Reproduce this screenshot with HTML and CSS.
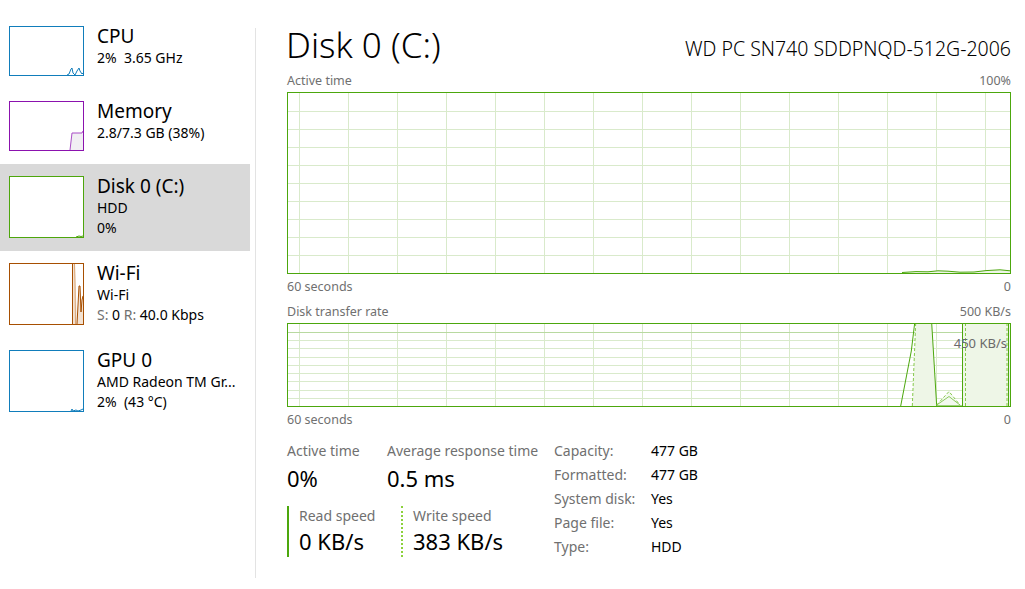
FILE: index.html
```html
<!DOCTYPE html>
<html lang="en">
<head>
<meta charset="utf-8">
<title>Task Manager - Disk 0 (C:)</title>
<link rel="stylesheet" href="styles.css">
</head>
<body>
<div class="app">
  <aside class="sidebar">
    <div class="item">
      <div class="thumb thumb-cpu">
        <svg viewBox="0 0 73 48" width="73" height="48">
          <polyline class="ln-cpu" points="57,48 59,47 61,42 62,41 63,46 65,48 67,44 69,41 70,44 72,47 73,46"/>
        </svg>
      </div>
      <div class="info">
        <div class="name">CPU</div>
        <div class="sub">2%&nbsp; 3.65 GHz</div>
      </div>
    </div>
    <div class="item">
      <div class="thumb thumb-mem">
        <svg viewBox="0 0 73 48" width="73" height="48">
          <polygon class="fl-mem" points="60,48 62,31 72,31 73,29 73,48"/>
          <polyline class="ln-mem" points="60,48 62,31 72,31 73,29"/>
        </svg>
      </div>
      <div class="info">
        <div class="name">Memory</div>
        <div class="sub">2.8/7.3 GB (38%)</div>
      </div>
    </div>
    <div class="item selected">
      <div class="thumb thumb-disk tall">
        <svg viewBox="0 0 73 60" width="73" height="60">
          <polyline class="ln-disk" points="66,60 69,59 71,59.5 73,59"/>
        </svg>
      </div>
      <div class="info">
        <div class="name">Disk 0 (C:)</div>
        <div class="sub">HDD</div>
        <div class="sub">0%</div>
      </div>
    </div>
    <div class="item">
      <div class="thumb thumb-net tall">
        <svg viewBox="0 0 73 60" width="73" height="60">
          <polygon class="fl-net" points="62,60 62,0 65,0 66,30 67,60 69,20 70,24 71,45 72,36 73,30 73,60"/>
          <polyline class="ln-net" points="62.5,60 62.5,0"/>
          <polyline class="ln-net2" points="64.5,0 65,20 65.5,60"/>
          <polyline class="ln-net" points="67,60 69,22 70,22 71,48 72,36 73,32"/>
        </svg>
      </div>
      <div class="info">
        <div class="name">Wi-Fi</div>
        <div class="sub">Wi-Fi</div>
        <div class="sub"><span class="dim">S:</span> 0 <span class="dim">R:</span> 40.0 Kbps</div>
      </div>
    </div>
    <div class="item">
      <div class="thumb thumb-gpu tall">
        <svg viewBox="0 0 73 60" width="73" height="60">
          <polyline class="ln-cpu" points="61,60 62,58 63,60 66,59 68,60 71,59 73,58"/>
        </svg>
      </div>
      <div class="info">
        <div class="name">GPU 0</div>
        <div class="sub">AMD Radeon TM Gr...</div>
        <div class="sub">2%&nbsp; (43 °C)</div>
      </div>
    </div>
  </aside>

  <div class="divider"></div>

  <main class="detail">
    <header class="head">
      <h1 class="title">Disk 0 (C:)</h1>
      <div class="model">WD PC SN740 SDDPNQD-512G-2006</div>
    </header>

    <div class="axis axis-top"><span>Active time</span><span>100%</span></div>
    <div class="graph graph-active">
      <svg viewBox="0 0 722 180" width="722" height="180">
        <g class="grid">
          <line x1="0" y1="18.5" x2="722" y2="18.5"/>
          <line x1="0" y1="36.5" x2="722" y2="36.5"/>
          <line x1="0" y1="54.5" x2="722" y2="54.5"/>
          <line x1="0" y1="72.5" x2="722" y2="72.5"/>
          <line x1="0" y1="90.5" x2="722" y2="90.5"/>
          <line x1="0" y1="108.5" x2="722" y2="108.5"/>
          <line x1="0" y1="126.5" x2="722" y2="126.5"/>
          <line x1="0" y1="144.5" x2="722" y2="144.5"/>
          <line x1="0" y1="162.5" x2="722" y2="162.5"/>
          <line x1="11.5" y1="0" x2="11.5" y2="180"/>
          <line x1="60.5" y1="0" x2="60.5" y2="180"/>
          <line x1="109.5" y1="0" x2="109.5" y2="180"/>
          <line x1="158.5" y1="0" x2="158.5" y2="180"/>
          <line x1="207.5" y1="0" x2="207.5" y2="180"/>
          <line x1="256.5" y1="0" x2="256.5" y2="180"/>
          <line x1="305.5" y1="0" x2="305.5" y2="180"/>
          <line x1="354.5" y1="0" x2="354.5" y2="180"/>
          <line x1="403.5" y1="0" x2="403.5" y2="180"/>
          <line x1="452.5" y1="0" x2="452.5" y2="180"/>
          <line x1="501.5" y1="0" x2="501.5" y2="180"/>
          <line x1="550.5" y1="0" x2="550.5" y2="180"/>
          <line x1="599.5" y1="0" x2="599.5" y2="180"/>
          <line x1="648.5" y1="0" x2="648.5" y2="180"/>
          <line x1="697.5" y1="0" x2="697.5" y2="180"/>
        </g>
        <polygon class="area" points="614,180 614,179.5 628,178.6 640,178.8 650,177.8 660,178.2 672,179.2 686,179 698,177.6 712,176.8 722,177.8 722,180"/>
        <polyline class="ln" points="614,179.5 628,178.6 640,178.8 650,177.8 660,178.2 672,179.2 686,179 698,177.6 712,176.8 722,177.8"/>
      </svg>
    </div>
    <div class="axis axis-bottom"><span>60 seconds</span><span>0</span></div>

    <div class="axis axis-top spaced"><span>Disk transfer rate</span><span>500 KB/s</span></div>
    <div class="graph graph-rate">
      <svg viewBox="0 0 722 82" width="722" height="82">
        <g class="grid">
          <line x1="0" y1="16.5" x2="722" y2="16.5"/>
          <line x1="0" y1="24.5" x2="722" y2="24.5"/>
          <line x1="0" y1="33.5" x2="722" y2="33.5"/>
          <line x1="0" y1="41.5" x2="722" y2="41.5"/>
          <line x1="0" y1="49.5" x2="722" y2="49.5"/>
          <line x1="0" y1="57.5" x2="722" y2="57.5"/>
          <line x1="0" y1="66.5" x2="722" y2="66.5"/>
          <line x1="0" y1="74.5" x2="722" y2="74.5"/>
          <line x1="11.5" y1="0" x2="11.5" y2="82"/>
          <line x1="60.5" y1="0" x2="60.5" y2="82"/>
          <line x1="109.5" y1="0" x2="109.5" y2="82"/>
          <line x1="158.5" y1="0" x2="158.5" y2="82"/>
          <line x1="207.5" y1="0" x2="207.5" y2="82"/>
          <line x1="256.5" y1="0" x2="256.5" y2="82"/>
          <line x1="305.5" y1="0" x2="305.5" y2="82"/>
          <line x1="354.5" y1="0" x2="354.5" y2="82"/>
          <line x1="403.5" y1="0" x2="403.5" y2="82"/>
          <line x1="452.5" y1="0" x2="452.5" y2="82"/>
          <line x1="501.5" y1="0" x2="501.5" y2="82"/>
          <line x1="550.5" y1="0" x2="550.5" y2="82"/>
          <line x1="599.5" y1="0" x2="599.5" y2="82"/>
          <line x1="648.5" y1="0" x2="648.5" y2="82"/>
          <line x1="697.5" y1="0" x2="697.5" y2="82"/>
        </g>
        <line class="limit" x1="0" y1="8.5" x2="722" y2="8.5"/>
        <polygon class="area" points="624.3,82 627.7,0 643.7,0 648.7,82"/>
        <polygon class="area" points="674,82 674,0 722,0 722,82"/>
        <polygon class="area soft" points="648.7,82 661,67.5 672,82"/>
        <polyline class="ln" points="612.7,82 623.3,27 626.7,-1"/>
        <polyline class="ln" points="643.7,-1 648.7,82 674.5,82 674.5,-1"/>
        <polyline class="ln" points="720.5,-1 720.5,82"/>
        <polyline class="ln thin" points="648.7,81 661,72.5 672,81"/>
        <polyline class="dash" points="624.3,82 627.7,-1"/>
        <polyline class="dash" points="648.7,81 661,67.5 672,81"/>
        <polyline class="dash" points="677.5,82 677.5,-1"/>
        <polyline class="dash" points="719,82 719,-1"/>
      </svg>
      <span class="limit-label">450 KB/s</span>
    </div>
    <div class="axis axis-bottom"><span>60 seconds</span><span>0</span></div>

    <section class="stats">
      <div class="stats-main">
        <div class="stat-row">
          <div class="stat stat-active">
            <div class="stat-label">Active time</div>
            <div class="stat-value">0%</div>
          </div>
          <div class="stat">
            <div class="stat-label">Average response time</div>
            <div class="stat-value">0.5 ms</div>
          </div>
        </div>
        <div class="stat-row">
          <div class="stat speed read">
            <div class="stat-label">Read speed</div>
            <div class="stat-value">0 KB/s</div>
          </div>
          <div class="stat speed write">
            <div class="stat-label">Write speed</div>
            <div class="stat-value">383 KB/s</div>
          </div>
        </div>
      </div>
      <dl class="props">
        <div class="prop"><dt>Capacity:</dt><dd>477 GB</dd></div>
        <div class="prop"><dt>Formatted:</dt><dd>477 GB</dd></div>
        <div class="prop"><dt>System disk:</dt><dd>Yes</dd></div>
        <div class="prop"><dt>Page file:</dt><dd>Yes</dd></div>
        <div class="prop"><dt>Type:</dt><dd>HDD</dd></div>
      </dl>
    </section>
  </main>
</div>
</body>
</html>
```

FILE: styles.css
```css
* { box-sizing: border-box; }

html, body {
  margin: 0;
  padding: 0;
  background: #ffffff;
}

body {
  font-family: "Segoe UI", "Noto Sans", "Open Sans", sans-serif;
  color: #000;
  width: 1025px;
  height: 589px;
  overflow: hidden;
}

.app {
  display: flex;
  align-items: flex-start;
  height: 589px;
}

/* ---------- sidebar ---------- */
.sidebar {
  width: 250px;
  padding-top: 14px;
  flex: none;
}

.item {
  display: flex;
  align-items: flex-start;
  padding: 12px 0 13px 9px;
}

.item.selected {
  background: #d9d9d9;
}

.thumb {
  width: 75px;
  height: 50px;
  border: 1px solid;
  background: #fff;
  flex: none;
}
.thumb.tall { height: 62px; }
.thumb svg { display: block; }

.thumb-cpu, .thumb-gpu { border-color: #117dbb; }
.thumb-mem { border-color: #8b12ae; }
.thumb-disk { border-color: #4da60c; }
.thumb-net { border-color: #a74f01; }

.ln-cpu { fill: none; stroke: #117dbb; stroke-width: 1; }
.ln-mem { fill: none; stroke: #a94fc6; stroke-width: 1; }
.fl-mem { fill: #f1eff3; }
.ln-disk { fill: none; stroke: #4da60c; stroke-width: 1; }
.fl-net { fill: #f3e2d2; }
.ln-net { fill: none; stroke: #a74f01; stroke-width: 1; }
.ln-net2 { fill: none; stroke: #d9a677; stroke-width: 1; }

.info {
  margin-left: 13px;
  margin-top: -2px;
}

.name {
  font-size: 19px;
  line-height: 24px;
}

.sub {
  font-size: 14px;
  line-height: 20px;
  white-space: nowrap;
}

.dim { color: #707070; }

.divider {
  width: 1px;
  height: 550px;
  margin-top: 28px;
  margin-left: 5px;
  background: #e3e3e3;
  flex: none;
}

/* ---------- detail ---------- */
.detail {
  margin-left: 31px;
  width: 724px;
  padding-top: 25px;
  flex: none;
}

.head {
  display: flex;
  justify-content: space-between;
  align-items: flex-end;
  height: 40px;
  margin-bottom: 8px;
}

.title {
  margin: 0;
  font-size: 35px;
  font-weight: 300;
  line-height: 40px;
  margin-left: -1px;
}

.model {
  font-size: 19.5px;
  font-weight: 300;
  line-height: 24px;
  padding-bottom: 4px;
}

.axis {
  display: flex;
  justify-content: space-between;
  font-size: 12.5px;
  line-height: 16px;
  color: #707070;
}

.axis-top { margin-bottom: 3px; }
.axis-top.spaced { margin-top: 9px; }
.axis-bottom { margin-top: 5px; }

.graph {
  position: relative;
  border: 1px solid #4ca70d;
  background: #fff;
  overflow: hidden;
}
.graph svg { display: block; }

.graph-active { height: 182px; }
.graph-rate { height: 84px; }

.grid line { stroke: #d9eacb; stroke-width: 1; }
.limit { stroke: #b8d9a0; stroke-width: 1; }

.area { fill: #eef6e7; }
.area.soft { fill: #f3f9ef; }

.ln { fill: none; stroke: #4ca70d; stroke-width: 1; }
.ln.thin { stroke: #8cca5e; }
.dash { fill: none; stroke: #86c94b; stroke-width: 1; stroke-dasharray: 3 2; }

.limit-label {
  position: absolute;
  right: 3px;
  top: 11px;
  font-size: 13px;
  line-height: 16px;
  color: #6a6a6a;
}

/* ---------- stats ---------- */
.stats {
  display: flex;
  margin-top: 13px;
}

.stats-main { width: 267px; }

.stat-row { display: flex; }

.stat-active { width: 100px; }

.stat-label {
  font-size: 14px;
  line-height: 20px;
  color: #707070;
  white-space: nowrap;
}

.stat-value {
  font-size: 22px;
  line-height: 30px;
  margin-top: 2px;
  white-space: nowrap;
}

.stat-row + .stat-row { margin-top: 13px; }

.speed {
  padding-left: 10px;
  height: 51px;
}
.speed .stat-value { margin-top: 0; }

.read {
  width: 114px;
  border-left: 2px solid #4ca70d;
}

.write {
  border-left: 2px dotted #8cd13c;
}

.props {
  margin: -2px 0 0 0;
}

.prop {
  display: flex;
  font-size: 14px;
  line-height: 24px;
}

.prop dt {
  width: 97px;
  color: #707070;
}

.prop dd {
  margin: 0;
}
```
